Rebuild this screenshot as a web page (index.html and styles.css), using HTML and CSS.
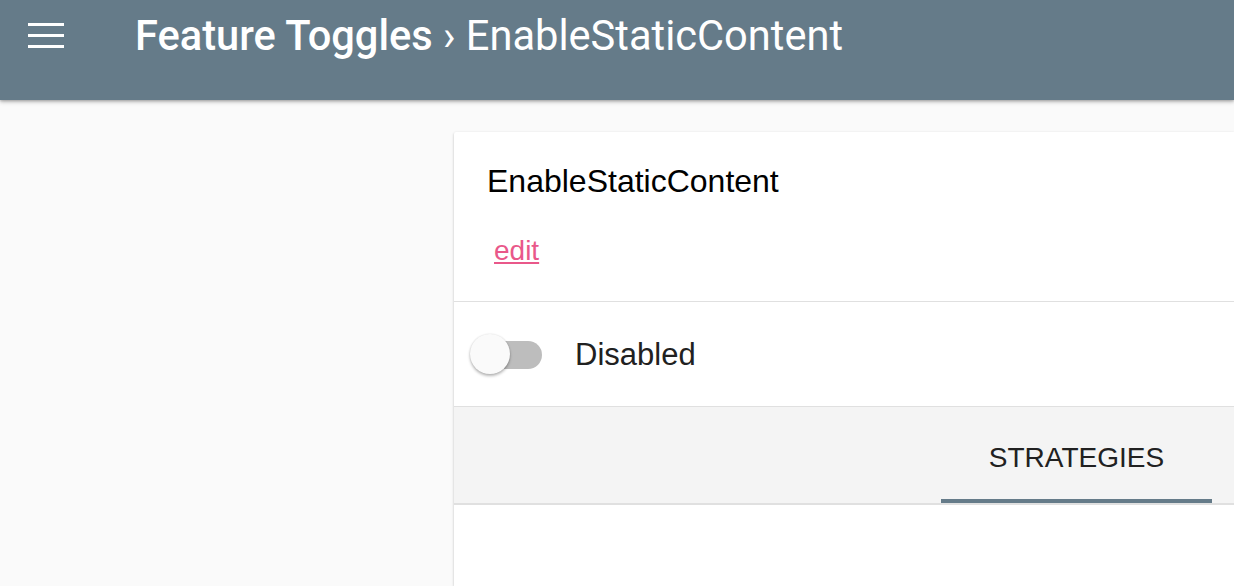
FILE: index.html
```html
<!DOCTYPE html>
<html>
<head>
<meta charset="utf-8">
<link rel="stylesheet" href="styles.css">
</head>
<body>
<header class="appbar">
  <button class="menu" aria-label="menu">
    <svg width="36" height="26" viewBox="0 0 36 26"><rect x="0" y="0" width="36" height="3" fill="#fff"/><rect x="0" y="11" width="36" height="3" fill="#fff"/><rect x="0" y="22" width="36" height="3" fill="#fff"/></svg>
  </button>
  <h1 class="title"><span class="crumb">Feature Toggles</span> › EnableStaticContent</h1>
</header>
<main class="main">
  <section class="card">
    <div class="card-head">
      <h2 class="name">EnableStaticContent</h2>
      <a class="edit" href="#">edit</a>
    </div>
    <div class="toggle-row">
      <span class="switch"><span class="track"></span><span class="thumb"></span></span>
      <span class="state">Disabled</span>
    </div>
    <nav class="tabs">
      <div class="tab active">STRATEGIES</div>
    </nav>
    <div class="tab-body"></div>
  </section>
</main>
</body>
</html>
```
FILE: styles.css
```css
html, body {
  margin: 0;
  padding: 0;
  background: #fafafa;
  overflow: hidden;
  height: 586px;
}
body {
  font-family: "Liberation Sans", Arial, sans-serif;
}
.appbar {
  height: 100px;
  background: #657b89;
  display: flex;
  align-items: flex-start;
  box-shadow: 0 2px 4px rgba(0,0,0,0.25), 0 1px 2px rgba(0,0,0,0.15);
  position: relative;
  z-index: 2;
  box-sizing: border-box;
}
.menu {
  background: none;
  border: 0;
  padding: 0;
  margin: 23px 0 0 28px;
  width: 36px;
  height: 26px;
  display: block;
}
.menu svg { display: block; }
.title {
  margin: 12px 0 0 71px;
  font-family: Roboto, "Liberation Sans", sans-serif;
  font-size: 41.6px;
  line-height: 48px;
  font-weight: 400;
  color: #fff;
  white-space: nowrap;
}
.crumb { font-weight: 500; }
.main {
  padding: 32px 0 0 454px;
  height: 454px;
}
.card {
  background: #fff;
  border-radius: 2px 0 0 0;
  box-shadow: 0 1px 3px rgba(0,0,0,0.2), 0 1px 1px rgba(0,0,0,0.14), 0 2px 1px -1px rgba(0,0,0,0.12);
  height: 454px;
}
.card-head {
  padding: 31px 0 34px 33px;
  border-bottom: 1px solid #e0e0e0;
}
.name {
  margin: 0;
  font-size: 32px;
  line-height: 36px;
  font-weight: 400;
  color: #000;
}
.edit {
  display: inline-block;
  margin: 36px 0 0 7px;
  font-size: 28px;
  line-height: 32px;
  color: #e9588a;
  text-decoration: underline;
  text-decoration-color: #e9588a;
}
.toggle-row {
  height: 105px;
  box-sizing: border-box;
  border-bottom: 1px solid #e0e0e0;
  display: flex;
  align-items: center;
  padding-left: 16px;
  gap: 33px;
}
.switch {
  position: relative;
  width: 72px;
  height: 40px;
  display: block;
  flex: none;
}
.track {
  position: absolute;
  left: 4px;
  top: 7px;
  width: 68px;
  height: 28px;
  border-radius: 14px;
  background: #bdbdbd;
}
.thumb {
  position: absolute;
  left: 0;
  top: 0;
  width: 40px;
  height: 40px;
  border-radius: 50%;
  background: #fafafa;
  box-shadow: 0 2px 3px rgba(0,0,0,0.28), 0 0 2px rgba(0,0,0,0.12);
}
.state {
  font-size: 31px;
  line-height: 36px;
  color: #212121;
  padding-top: 2px;
}
.tabs {
  height: 98px;
  box-sizing: border-box;
  background: #f4f4f4;
  border-bottom: 2px solid #e0e0e0;
  display: flex;
  justify-content: flex-end;
  padding-right: 22px;
}
.tab {
  width: 271px;
  box-sizing: border-box;
  padding-top: 35px;
  text-align: center;
  font-size: 28px;
  line-height: 32px;
  color: #212121;
  border-bottom: 4px solid #657b89;
  height: 96px;
}
```
